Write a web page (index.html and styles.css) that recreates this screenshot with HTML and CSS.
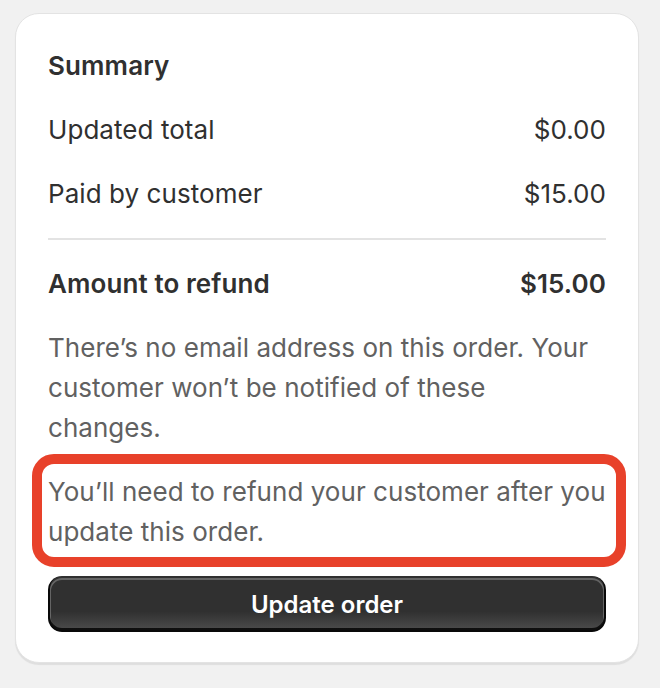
FILE: index.html
```html
<!DOCTYPE html>
<html lang="en">
<head>
<meta charset="utf-8">
<title>Summary</title>
<link rel="stylesheet" href="styles.css">
</head>
<body>
<div class="card">
  <h2 class="title">Summary</h2>
  <div class="row"><span>Updated total</span><span>$0.00</span></div>
  <div class="row"><span>Paid by customer</span><span>$15.00</span></div>
  <hr class="divider">
  <div class="row strong"><span>Amount to refund</span><span>$15.00</span></div>
  <p class="note first">There’s no email address on this order. Your customer won’t be notified of these changes.</p>
  <p class="note highlighted">You’ll need to refund your customer after you update this order.</p>
  <button class="primary" type="button">Update order</button>
</div>
</body>
</html>
```
FILE: styles.css
```css
html, body {
  margin: 0;
  padding: 0;
  background: #f1f1f1;
}
body {
  padding: 13px 21px 24px 15px;
  font-family: Inter, "Noto Sans", sans-serif;
  color: #303030;
  font-size: 26px;
  line-height: 40px;
  letter-spacing: 0.06px;
}
.card {
  background: #ffffff;
  border: 1px solid #e3e3e3;
  border-radius: 24px;
  box-shadow: 0 2px 1px rgba(0,0,0,0.08);
  padding: 32px 32px 30px;
  display: flex;
  flex-direction: column;
  gap: 24px;
}
.title {
  margin: 0;
  font-size: 26px;
  font-weight: 600;
  line-height: 40px;
  letter-spacing: 0.12px;
}
.row {
  display: flex;
  justify-content: space-between;
}
.row.strong {
  font-weight: 600;
  letter-spacing: 0.1px;
}
.divider {
  margin: 0;
  border: 0;
  height: 2px;
  background: #e3e3e3;
}
.note {
  margin: 0;
  color: #616161;
  letter-spacing: 0.04px;
}
.note.first {
  padding-right: 10px;
}
.highlighted {
  position: relative;
}
.highlighted::after {
  content: "";
  position: absolute;
  left: -16px;
  right: -20px;
  top: -18px;
  bottom: -15px;
  border: 10px solid #e8412a;
  border-radius: 22px;
  pointer-events: none;
}
.primary {
  height: 56px;
  border: 0;
  border-radius: 14px;
  font-family: inherit;
  font-size: 24px;
  font-weight: 600;
  letter-spacing: 0;
  color: #ffffff;
  background: linear-gradient(180deg, rgba(48,48,48,0) 63%, rgba(255,255,255,0.15) 100%), #303030;
  box-shadow: inset 0 -2px 0 2px rgba(0,0,0,0.8), inset 0 0 0 2px #303030, inset 0 1px 0 3px rgba(255,255,255,0.25);
}
```
